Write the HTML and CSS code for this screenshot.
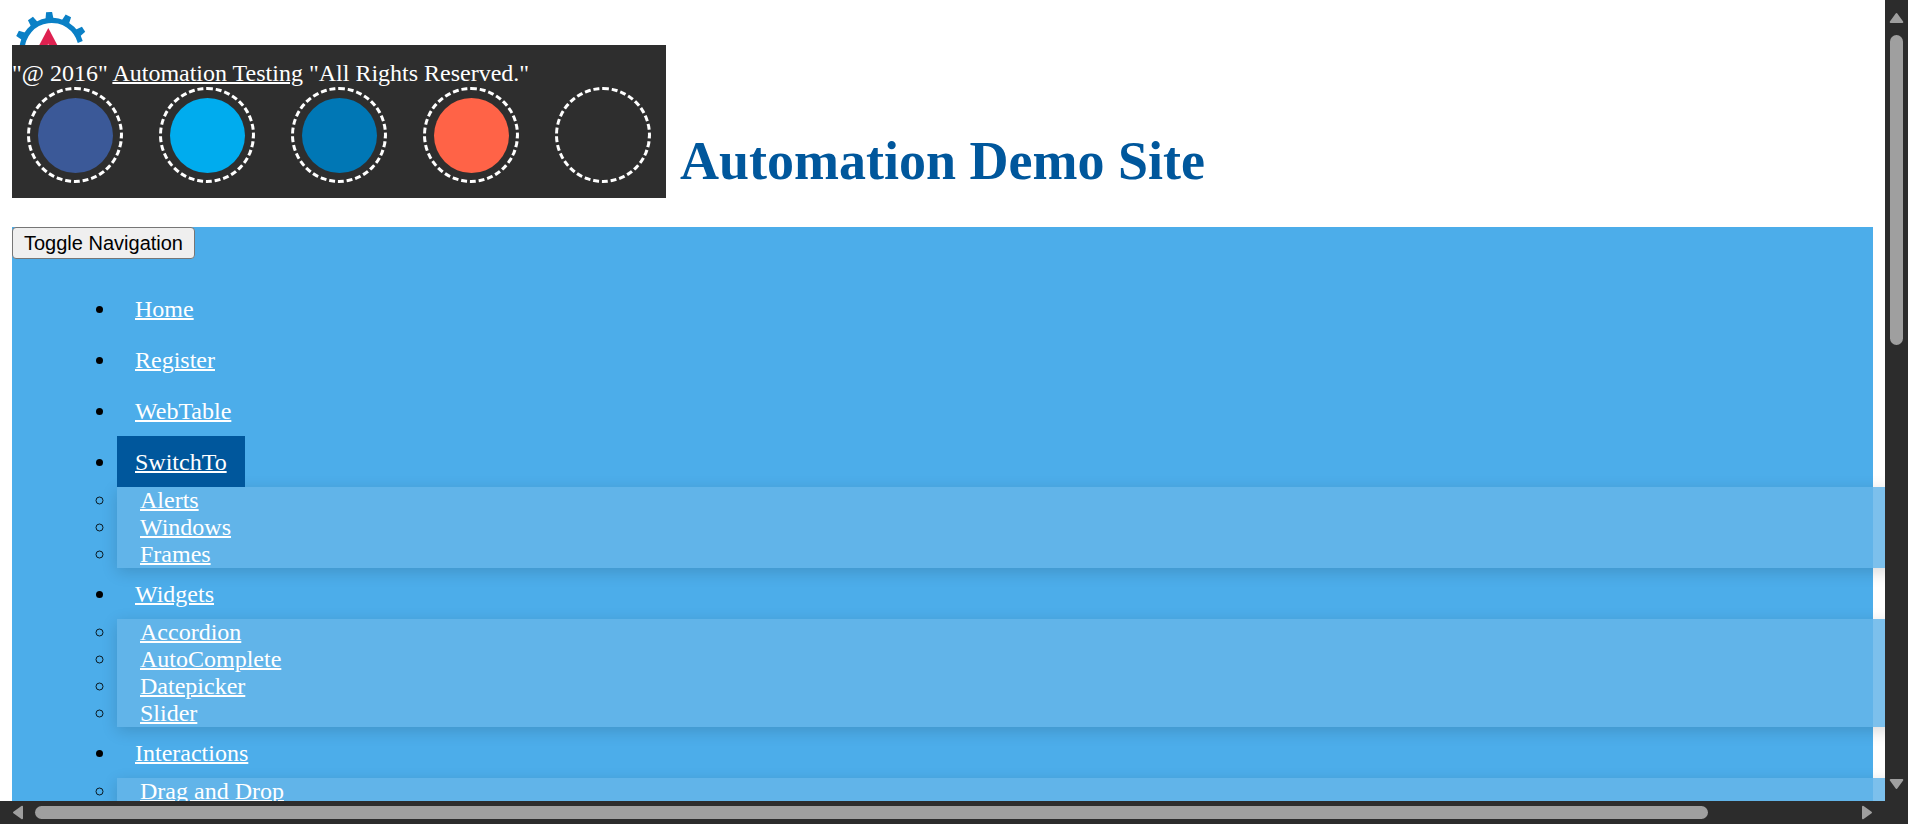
FILE: index.html
```html
<!DOCTYPE html>
<html lang="en">
<head>
<meta charset="utf-8">
<title>Automation Demo Site</title>
<link rel="stylesheet" href="styles.css">
</head>
<body>
<div class="viewport">
  <div class="page">
    <header>
      <svg class="logo" width="78" height="33" viewBox="12 12 78 33" role="img" aria-label="Automation Testing logo">
        <g fill="#0a80c6">
          <g transform="translate(51.700 50)">
            <path id="tooth" transform="rotate(-4)" d="M-4-31-3-38H3L4-31Z"/>
            <use href="#tooth" transform="rotate(30)"/>
            <use href="#tooth" transform="rotate(61)"/>
            <use href="#tooth" transform="rotate(-30)"/>
            <use href="#tooth" transform="rotate(-60)"/>
          </g>
          <path d="M19.400 50A32.300 32.300 0 0 1 82.700 41L77.800 43A27 27 0 0 0 24.700 50Z"/>
        </g>
        <path fill="#de2150" d="M48.300 28 57.800 46H38.800Z"/>
        <path fill="#f0a0b4" d="M48.300 43.500 49.500 46H47Z"/>
      </svg>
      <div class="banner">
        <div class="credits">
          <div class="copyright">"@ 2016" <a href="#">Automation Testing</a> "All Rights Reserved."</div>
          <div class="social">
            <a class="ring" href="#" aria-label="Facebook"><span class="dot facebook"></span></a>
            <a class="ring" href="#" aria-label="Twitter"><span class="dot twitter"></span></a>
            <a class="ring" href="#" aria-label="LinkedIn"><span class="dot linkedin"></span></a>
            <a class="ring" href="#" aria-label="Google Plus"><span class="dot google"></span></a>
            <a class="ring" href="#" aria-label="YouTube"><span class="dot"></span></a>
          </div>
        </div>
        <h1>Automation Demo Site</h1>
      </div>
    </header>
    <nav>
      <button class="toggle" type="button">Toggle Navigation</button>
      <ul class="menu">
        <li><a href="#">Home</a></li>
        <li><a href="#">Register</a></li>
        <li><a href="#">WebTable</a></li>
        <li><a class="active" href="#">SwitchTo</a>
          <ul class="submenu">
            <li><a href="#">Alerts</a></li>
            <li><a href="#">Windows</a></li>
            <li><a href="#">Frames</a></li>
          </ul>
        </li>
        <li><a href="#">Widgets</a>
          <ul class="submenu">
            <li><a href="#">Accordion</a></li>
            <li><a href="#">AutoComplete</a></li>
            <li><a href="#">Datepicker</a></li>
            <li><a href="#">Slider</a></li>
          </ul>
        </li>
        <li><a href="#">Interactions</a>
          <ul class="submenu">
            <li><a href="#">Drag and Drop</a></li>
          </ul>
        </li>
      </ul>
    </nav>
  </div>
  <div class="scrollbar vertical" aria-hidden="true">
    <svg width="15" height="12" viewBox="0 0 15 12"><path d="M7.500 2 13.300 10H1.700Z"/></svg>
    <div class="track"><div class="thumb"></div></div>
    <svg width="15" height="12" viewBox="0 0 15 12"><path d="M1.700 2H13.300L7.500 10Z"/></svg>
  </div>
  <div class="scrollbar horizontal" aria-hidden="true">
    <svg width="12" height="15" viewBox="0 0 12 15"><path d="M2 7.500 10 1.700V13.300Z"/></svg>
    <div class="track"><div class="thumb"></div></div>
    <svg width="12" height="15" viewBox="0 0 12 15"><path d="M2 1.700 10 7.500 2 13.300Z"/></svg>
  </div>
  <div class="corner"></div>
</div>
</body>
</html>
```
FILE: styles.css
```css
* {
  box-sizing: border-box;
}

body {
  margin: 0;
  font: 24px/27px "Liberation Serif", "Times New Roman", serif;
  color: #000;
  background: #fff;
}

.viewport {
  display: grid;
  grid-template-columns: minmax(0, 1fr) 23px;
  grid-template-rows: minmax(0, 1fr) 23px;
  height: 100vh;
}

.page {
  padding: 12px;
  overflow: hidden;
}

.page a {
  color: #fff;
  text-decoration-thickness: 2px;
}

.logo {
  display: block;
}

.banner {
  display: flex;
  align-items: flex-end;
  gap: 14px;
  margin-bottom: 29px;
}

.credits {
  padding: 15px 0;
  background: #2e2e2e;
  color: #fff;
}

.social {
  display: flex;
  gap: 36px;
  padding: 0 15px;
}

.ring {
  display: block;
  width: 96px;
  height: 96px;
  padding: 8px;
  border: 3px dashed #fff;
  border-radius: 50%;
}

.dot {
  display: block;
  width: 75px;
  height: 75px;
  border-radius: 50%;
}

.facebook {
  background: #3b5998;
}

.twitter {
  background: #00acee;
}

.linkedin {
  background: #0077b5;
}

.google {
  background: #ff6347;
}

h1 {
  margin: 0;
  padding-bottom: 7px;
  font-size: 54px;
  line-height: 60px;
  color: #00579c;
}

nav {
  background: #4cadea;
}

.toggle {
  display: block;
  padding: 3px 11px;
  border: 1px solid #767676;
  border-radius: 4px;
  background: #efefef;
  font: 20px/24px "Liberation Sans", Arial, sans-serif;
  color: #000;
}

.menu {
  margin: 0;
  padding: 24px 0 24px 105px;
  list-style: disc;
}

.menu > li > a {
  display: inline-block;
  padding: 13px 18px 11px;
}

.menu .active {
  background: #00579c;
}

.submenu {
  margin: 0 -24px 0 0;
  padding: 0;
  list-style: circle;
  background: rgba(101, 181, 233, 0.85);
  box-shadow: 0 4px 15px rgba(0, 0, 0, 0.15);
}

.submenu li::marker {
  color: rgba(0, 0, 0, 0.85);
}

.submenu a {
  margin-left: 23px;
}

.scrollbar {
  display: flex;
  align-items: center;
  justify-content: space-between;
  gap: 11px;
  background: #2c2c2c;
}

.scrollbar svg {
  flex: none;
  fill: #9f9f9f;
  stroke: #9f9f9f;
  stroke-width: 2px;
  stroke-linejoin: round;
}

.vertical {
  flex-direction: column;
  padding: 12px 0 11px;
}

.horizontal {
  padding: 0 12px;
}

.track {
  flex: 1;
}

.thumb {
  border-radius: 7px;
  background: #9f9f9f;
}

.vertical .thumb {
  width: 13px;
  height: 42.4%;
}

.vertical .track {
  width: 13px;
}

.horizontal .thumb {
  width: 92.2%;
  height: 13px;
}

.corner {
  background: #2c2c2c;
}
```
